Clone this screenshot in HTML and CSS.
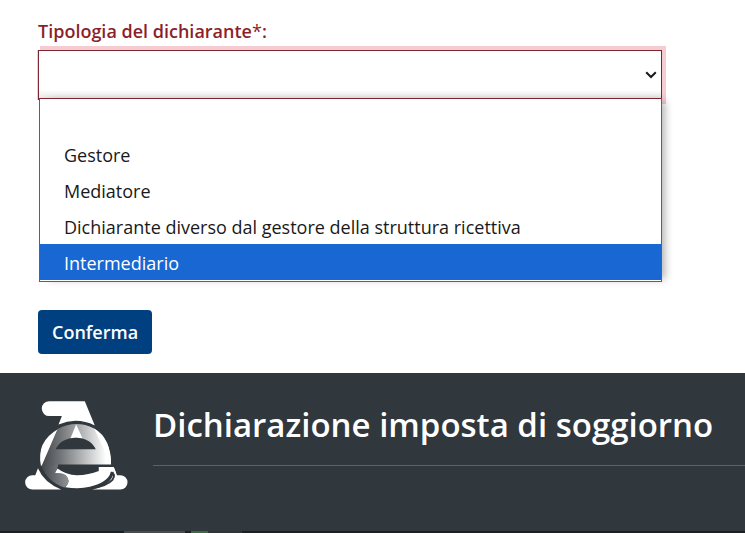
FILE: index.html
```html
<!DOCTYPE html>
<html lang="it">
<head>
  <meta charset="UTF-8">
  <meta name="viewport" content="width=device-width, initial-scale=1">
  <title>Dichiarazione imposta di soggiorno</title>
  <link rel="stylesheet" href="styles.css">
</head>
<body>
  <form class="form">
    <label for="tipologia">Tipologia del dichiarante<span class="required">*</span>:</label>
    <div class="select-wrapper">
      <select id="tipologia" name="tipologia" required>
        <option value=""></option>
      </select>
      <svg class="arrow" viewBox="0 0 12 8" aria-hidden="true">
        <path d="M1.2 1.2 L6 6 L10.8 1.2" fill="none" stroke="#1a1a1a" stroke-width="2"/>
      </svg>
      <ul class="menu" role="listbox" aria-label="Tipologia del dichiarante">
        <li role="option"></li>
        <li role="option">Gestore</li>
        <li role="option">Mediatore</li>
        <li role="option">Dichiarante diverso dal gestore della struttura ricettiva</li>
        <li role="option" class="active" aria-selected="true">Intermediario</li>
      </ul>
    </div>
    <button type="button">Conferma</button>
  </form>

  <footer class="footer">
    <svg class="logo" viewBox="45 30 310 270" aria-hidden="true">
      <defs>
        <linearGradient id="shade" gradientUnits="userSpaceOnUse" x1="95" y1="0" x2="290" y2="0">
          <stop offset="0" stop-color="#40464a"/>
          <stop offset="0.3" stop-color="#74777a"/>
          <stop offset="0.6" stop-color="#aeb0b1"/>
          <stop offset="1" stop-color="#ffffff"/>
        </linearGradient>
        <linearGradient id="foot" gradientUnits="userSpaceOnUse" x1="95" y1="0" x2="175" y2="0">
          <stop offset="0" stop-color="#40464a"/>
          <stop offset="1" stop-color="#8f9295"/>
        </linearGradient>
      </defs>
      <path d="M118 33 H225 L255 106 Q201 80 146 103 L156 78 H118 A22 22 0 0 1 118 33 Z" fill="#fff"/>
      <path d="M84 235 Q102 278 154 299 H67 A21 21 0 0 1 67 256 H76 Z" fill="#fff"/>
      <path d="M312 231 L322 256 H332 A21 21 0 0 1 332 299 H248 Q318 282 312 231 Z" fill="#fff"/>
      <path d="M93 228 Q78 155 145 117 L98 225 Z" fill="#fff"/>
      <path d="M95 228 L143 117 Q198 88 253 115 Q304 145 304 225 H145 L137 249 H157 Q180 257 174 278 Q170 290 162 292 Q112 272 95 228 Z" fill="url(#shade)"/>
      <path d="M253 115 Q304 145 304 225 L298 210 Z" fill="#fff"/>
      <path d="M199 103 L181 147 Q199 139 219 147 Z" fill="#fff"/>
      <path d="M137 178 Q154 143 198 143 Q241 143 258 178 Z" fill="#30373d"/>
      <path d="M145 224 H304 V230 H268 V243 Q234 256 201 256 Q169 256 143 238 Z" fill="#30373d"/>
      <path d="M143 236 Q169 256 201 256 Q237 255 267 243 V231 H312 L319 249 Q311 243 303 248 Q294 278 240 291 Q207 299 166 292 Q180 279 174 265 Q169 250 135 249 Z" fill="#fff"/>
      <path d="M95 228 Q112 275 164 293 Q179 281 174 265 Q169 251 152 250 H135 L146 224 Z" fill="url(#foot)"/>
      <path d="M303 248 Q320 252 308 270 Q292 288 246 295" fill="none" stroke="#30373d" stroke-width="6"/>
    </svg>
    <h1>Dichiarazione imposta di soggiorno</h1>
  </footer>
  <div class="strip"></div>
</body>
</html>
```
FILE: styles.css
```css
* {
  box-sizing: border-box;
}

body {
  margin: 0;
  font-family: "Open Sans", sans-serif;
  font-size: 18px;
  color: #19191a;
  background-color: #ffffff;
}

.form {
  padding: 17px 83px 19px 38px;
}

label {
  display: block;
  margin-bottom: 5px;
  line-height: 28px;
  font-weight: 600;
  color: #8c1f2b;
}

.required {
  font-weight: normal;
}

.select-wrapper {
  position: relative;
  margin-bottom: 210px;
}

select {
  display: block;
  width: 100%;
  height: 50px;
  padding: 0 24px;
  font: inherit;
  appearance: none;
  border: 1px solid #7d2632;
  border-radius: 0;
  outline: none;
  background: linear-gradient(#ffffff 80%, #e6e6e6);
  box-shadow: 3px 3px 0 1px #f4ccd2, 3px -3px 0 1px #f4ccd2, -1px 0 0 #f4ccd2;
}

.arrow {
  position: absolute;
  top: 21px;
  right: 5px;
  width: 12px;
  height: 8px;
}

.menu {
  position: absolute;
  top: 48px;
  left: 1px;
  right: 0;
  margin: 0;
  padding: 1px 0;
  list-style: none;
  background-color: #ffffff;
  border: 1px solid #5f6063;
  border-top-color: #7d2632;
  box-shadow: 6px 0 8px -3px rgba(0, 0, 0, 0.3);
}

.menu li {
  height: 36px;
  padding: 0 24px;
  line-height: 38px;
}

.menu .active {
  color: #ffffff;
  background-color: #1967d2;
}

button {
  display: block;
  height: 44px;
  padding: 0 14px;
  font: inherit;
  font-weight: 600;
  color: #ffffff;
  background-color: #004080;
  border: none;
  border-radius: 4px;
  cursor: pointer;
}

.footer {
  display: flex;
  align-items: flex-start;
  gap: 25px;
  height: 158px;
  padding: 27px 0 0 25px;
  background-color: #30373d;
}

.logo {
  flex: none;
  width: 103px;
  height: 90px;
}

h1 {
  flex: 1;
  margin: 0;
  padding-bottom: 16px;
  font-size: 33px;
  line-height: 49px;
  font-weight: 600;
  white-space: nowrap;
  color: #ffffff;
  border-bottom: 1px solid #5b6268;
}

.strip {
  height: 2px;
  background: linear-gradient(to right, #1c2023 124px, #484a4c 124px 185px, #1c2023 185px 191px, #3c6b3c 191px 208px, #303336 208px 242px, #1c2023 242px);
}
```
